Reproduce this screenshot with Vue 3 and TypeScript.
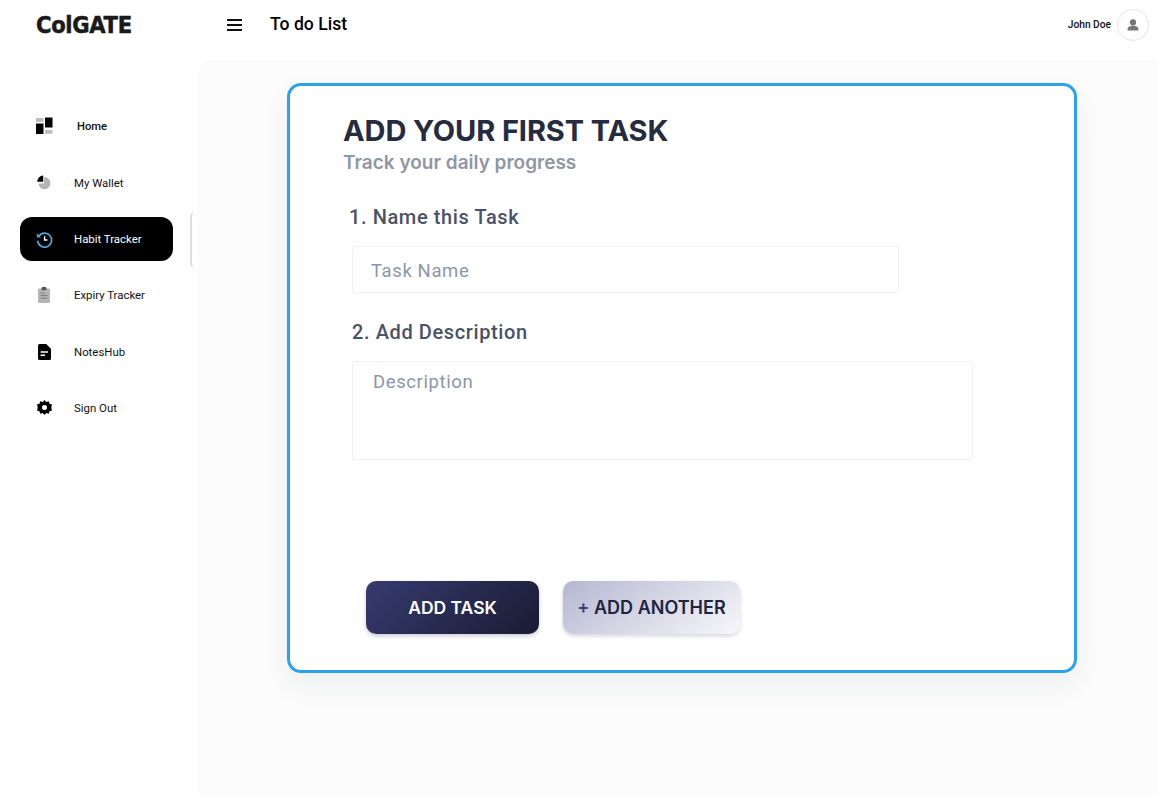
<template>
  <div class="page">
    <header class="topbar">
      <div class="logo"><span class="logo-text">ColGATE</span></div>
      <button class="menu-btn" aria-label="Menu">
        <svg width="15" height="12" viewBox="0 0 15 12">
          <path d="M0 1h15M0 6h15M0 11h15" stroke="#111" stroke-width="2" />
        </svg>
      </button>
      <h1 class="page-title">To do List</h1>
      <div class="user">
        <span class="user-name">John Doe</span>
        <span class="avatar">
          <svg width="12" height="12" viewBox="0 0 12 12">
            <circle cx="6" cy="3.4" r="3.1" fill="#777" />
            <path d="M0.6 11.5V9.6C0.6 8 3.5 6.8 6 6.8S11.4 8 11.4 9.6V11.5Z" fill="#777" />
          </svg>
        </span>
      </div>
    </header>

    <div class="body">
      <aside class="sidebar">
        <nav class="nav">
          <a
            v-for="item in navItems"
            :key="item.label"
            :class="['nav-item', { active: item.active, home: item.id === 'home' }]"
          >
            <span class="nav-icon">
              <svg v-if="item.id === 'home'" width="17" height="17" viewBox="0 0 17 17">
                <rect x="0" y="1" width="7.5" height="4" fill="#bdbdbd" />
                <rect x="9" y="0.5" width="7.5" height="10" fill="#000" />
                <rect x="0" y="6.5" width="7.5" height="10.5" fill="#000" />
                <rect x="9" y="13" width="7.5" height="3.8" fill="#bdbdbd" />
              </svg>
              <svg v-else-if="item.id === 'wallet'" width="15" height="15" viewBox="0 0 15 15">
                <path d="M7 2.2A6 6 0 1 1 1.5 8.5H7Z" fill="#b4b4b4" />
                <path d="M6.2 0.6V6.8H0.2A6.2 6.2 0 0 1 6.2 0.6Z" fill="#000" />
              </svg>
              <svg v-else-if="item.id === 'habit'" width="17" height="17" viewBox="0 0 17 17">
                <path d="M2.8 5.2A7 7 0 1 1 1.6 9.6" fill="none" stroke="#4fa6d8" stroke-width="1.6" />
                <path d="M0.8 2.2V6.4H5Z" fill="#4fa6d8" />
                <path d="M8.6 5.2V9H11.4" fill="none" stroke="#fff" stroke-width="1.4" />
              </svg>
              <svg v-else-if="item.id === 'expiry'" width="12" height="16" viewBox="0 0 12 16">
                <rect x="0" y="1.6" width="12" height="14.4" rx="1" fill="#b5b5b5" />
                <rect x="3.6" y="0" width="4.8" height="3.2" rx="1" fill="#555" />
                <path d="M2.5 6h4M2.5 8.6h7M2.5 11.2h7" stroke="#777" stroke-width="0.9" />
              </svg>
              <svg v-else-if="item.id === 'notes'" width="13" height="16" viewBox="0 0 13 16">
                <path d="M1.5 0H8.2L13 4.8V14.5A1.5 1.5 0 0 1 11.5 16H1.5A1.5 1.5 0 0 1 0 14.5V1.5A1.5 1.5 0 0 1 1.5 0Z" fill="#000" />
                <path d="M2.6 8h7.4M2.6 11.2h4.4" stroke="#fff" stroke-width="1.4" />
              </svg>
              <svg v-else width="15" height="15" viewBox="0 0 15 15">
                <path
                  fill-rule="evenodd"
                  fill="#000"
                  d="M7.5 0L9.3 1.9 11.8 1.3 12.5 3.8 15 4.5 14.3 7.5 15 10.5 12.5 11.2 11.8 13.7 9.3 13.1 7.5 15 5.7 13.1 3.2 13.7 2.5 11.2 0 10.5 .7 7.5 0 4.5 2.5 3.8 3.2 1.3 5.7 1.9ZM7.5 5a2.5 2.5 0 1 0 0 5 2.5 2.5 0 0 0 0-5Z"
                />
              </svg>
            </span>
            <span class="nav-label">{{ item.label }}</span>
          </a>
        </nav>
        <span class="collapse-tab"></span>
      </aside>

      <main class="main">
        <section class="card">
          <h2 class="card-title">ADD YOUR FIRST TASK</h2>
          <p class="card-sub">Track your daily progress</p>

          <form class="task-form" @submit.prevent>
            <label class="field-label" for="task-name">1. Name this Task</label>
            <input id="task-name" v-model="taskName" class="field name-field" placeholder="Task Name" />

            <label class="field-label desc-label" for="task-desc">2. Add Description</label>
            <textarea id="task-desc" v-model="description" class="field desc-field" placeholder="Description"></textarea>

            <div class="actions">
              <button class="btn btn-primary" type="submit">ADD TASK</button>
              <button class="btn btn-secondary" type="button"><span class="plus">+</span> ADD ANOTHER</button>
            </div>
          </form>
        </section>
      </main>
    </div>
  </div>
</template>

<script setup lang="ts">
import { ref } from 'vue'

interface NavItem {
  id: string
  label: string
  active?: boolean
}

const navItems: NavItem[] = [
  { id: 'home', label: 'Home' },
  { id: 'wallet', label: 'My Wallet' },
  { id: 'habit', label: 'Habit Tracker', active: true },
  { id: 'expiry', label: 'Expiry Tracker' },
  { id: 'notes', label: 'NotesHub' },
  { id: 'signout', label: 'Sign Out' }
]

const taskName = ref('')
const description = ref('')
</script>

<style>
html,
body {
  margin: 0;
  background: #fff;
  overflow: hidden;
}
</style>

<style scoped>
.page {
  width: 1158px;
  height: 795px;
  display: flex;
  flex-direction: column;
  font-family: Roboto, "Liberation Sans", sans-serif;
  background: #fff;
  overflow: hidden;
}

.topbar {
  height: 50px;
  display: flex;
  align-items: center;
  padding: 0 9px 0 36px;
  flex-shrink: 0;
}

.logo {
  width: 191px;
}

.logo-text {
  display: inline-block;
  font-family: "DejaVu Sans", sans-serif;
  font-weight: 700;
  font-size: 23px;
  letter-spacing: -0.4px;
  color: #1a1a1a;
  -webkit-text-stroke: 0.5px #1a1a1a;
  transform: scaleX(0.92);
  transform-origin: left center;
}

.menu-btn {
  display: flex;
  padding: 0;
  border: 0;
  background: none;
  margin-right: 28px;
}

.page-title {
  margin: 0 0 2px;
  font-size: 17.6px;
  font-weight: 500;
  color: #000;
}

.user {
  margin-left: auto;
  display: flex;
  align-items: center;
  gap: 6px;
  margin-bottom: 1px;
}

.user-name {
  font-size: 10.2px;
  font-weight: 500;
  color: #111;
}

.avatar {
  width: 30px;
  height: 30px;
  border: 1px solid #e6e6e6;
  border-radius: 50%;
  display: flex;
  align-items: center;
  justify-content: center;
}

.body {
  flex: 1;
  display: flex;
  min-height: 0;
  padding-top: 10px;
}

.sidebar {
  width: 197px;
  flex-shrink: 0;
  position: relative;
}

.nav {
  display: flex;
  flex-direction: column;
  gap: 12.25px;
  padding: 44.6px 0 0 20px;
}

.nav-item {
  width: 153px;
  height: 44px;
  box-sizing: border-box;
  display: flex;
  align-items: center;
  padding-left: 15px;
  border-radius: 12px;
  color: #111;
  font-size: 11.4px;
  font-weight: 400;
}

.nav-item.home {
  font-weight: 500;
  font-size: 11.2px;
}

.nav-item.active {
  background: #000;
  color: #fff;
}

.nav-icon {
  width: 18px;
  display: flex;
  justify-content: center;
  margin-right: 21px;
}

.nav-item.home .nav-icon {
  margin-right: 24px;
  margin-top: -2px;
}

.collapse-tab {
  position: absolute;
  left: 190px;
  top: 152px;
  width: 5px;
  height: 56px;
  box-sizing: border-box;
  border-left: 2px solid #dcdcdc;
  border-radius: 6px 0 0 6px;
}

.main {
  flex: 1;
  background: #fcfcfc;
  border-top-left-radius: 14px;
  padding: 23px 0 0 90px;
}

.card {
  width: 790px;
  height: 590px;
  box-sizing: border-box;
  background: #fff;
  border: 3px solid #2ba3ea;
  border-radius: 14px;
  box-shadow: 0 12px 30px rgba(30, 40, 70, 0.07);
  padding: 26px 0 0 53px;
}

.card-title {
  margin: 0;
  font-family: Inter, "Liberation Sans", sans-serif;
  font-size: 29px;
  line-height: 38px;
  font-weight: 700;
  color: #252c40;
  letter-spacing: -0.1px;
}

.card-sub {
  margin: 0;
  font-family: Inter, "Liberation Sans", sans-serif;
  font-size: 19px;
  line-height: 26px;
  font-weight: 600;
  color: #8f96a5;
}

.task-form {
  display: flex;
  flex-direction: column;
  align-items: flex-start;
  padding: 27px 0 0 6px;
}

.field-label {
  font-size: 20px;
  line-height: 28px;
  font-weight: 500;
  letter-spacing: 0.6px;
  color: #4a5268;
}

.field {
  display: block;
  margin: 15px 0 0 3px;
  box-sizing: border-box;
  font-family: Roboto, "Liberation Sans", sans-serif;
  font-size: 18.5px;
  letter-spacing: 0.6px;
  color: #4a5268;
  background: #fff;
  border: 1px solid #eef0f2;
  border-radius: 3px;
  outline: none;
}

.field::placeholder {
  color: #8e96a6;
  opacity: 1;
}

.name-field {
  width: 547px;
  height: 47px;
  padding: 2px 18px 0;
}

.desc-label {
  margin: 25px 0 0 3px;
}

.desc-field {
  width: 621px;
  height: 99px;
  padding: 9px 20px;
  margin-top: 15px;
  resize: none;
}

.actions {
  display: flex;
  gap: 24px;
  margin: 121px 0 0 17px;
}

.btn {
  height: 53px;
  border: 0;
  border-radius: 10px;
  font-family: Inter, "Liberation Sans", sans-serif;
  font-size: 17.5px;
  font-weight: 600;
  padding: 0;
}

.btn-primary {
  width: 173px;
  color: #fff;
  background: linear-gradient(135deg, #363b6e 0%, #1a1b33 100%);
  box-shadow: 0 2px 4px rgba(40, 45, 90, 0.25);
}

.btn-secondary {
  width: 177px;
  font-size: 18px;
  color: #20243f;
  background: linear-gradient(145deg, #b5b7d0 0%, #f7f7fb 100%);
  box-shadow: 0 2px 4px rgba(40, 45, 90, 0.2);
}

.plus {
  color: #3c3f70;
}
</style>
